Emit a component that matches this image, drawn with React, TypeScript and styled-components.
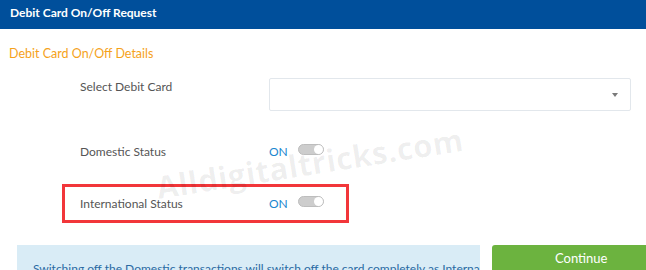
import styled, { createGlobalStyle } from 'styled-components';

const GlobalStyle = createGlobalStyle`
  html, body {
    margin: 0;
    padding: 0;
    background: #ffffff;
    overflow: hidden;
  }
  body {
    font-family: 'Segoe UI', Lato, 'Liberation Sans', sans-serif;
    font-size: 12px;
  }
`;

const Page = styled.div`
  position: relative;
  width: 646px;
  height: 270px;
  overflow: hidden;
`;

const Header = styled.div`
  height: 29px;
  background: #004f9b;
  color: #ffffff;
  font-weight: 700;
  font-size: 12px;
  display: flex;
  align-items: center;
  padding-left: 10px;
  padding-bottom: 4px;
  box-sizing: border-box;
`;

const SectionTitle = styled.div`
  color: #f5a21b;
  font-size: 12.5px;
  padding: 17px 0 0 9px;
  line-height: 16px;
`;

const Form = styled.div`
  display: flex;
  flex-direction: column;
  padding-top: 16px;
`;

const Row = styled.div<{ $highlight?: boolean; $align?: string }>`
  display: flex;
  align-items: ${(p) => p.$align || 'center'};
  box-sizing: border-box;
  margin-left: ${(p) => (p.$highlight ? '62px' : '0')};
  padding-left: ${(p) => (p.$highlight ? '15px' : '80px')};
  width: ${(p) => (p.$highlight ? '287px' : 'auto')};
  height: ${(p) => (p.$highlight ? '39px' : 'auto')};
  border: ${(p) => (p.$highlight ? '3px solid #f2363a' : 'none')};
`;

const Label = styled.div<{ $top?: number }>`
  width: 189px;
  color: #555555;
  font-size: 12px;
  line-height: 16px;
  padding-top: ${(p) => p.$top ?? 0}px;
  flex-shrink: 0;
`;

const Select = styled.div`
  width: 362px;
  height: 33px;
  box-sizing: border-box;
  border: 1.5px solid #e2e7ec;
  border-radius: 2px;
  display: flex;
  align-items: center;
  justify-content: flex-end;
  padding-right: 12px;
`;

const Caret = styled.span`
  width: 0;
  height: 0;
  border-left: 3px solid transparent;
  border-right: 3px solid transparent;
  border-top: 4px solid #7a7a7a;
  margin-top: 1px;
`;

const StatusText = styled.span`
  color: #1a87cf;
  font-size: 12px;
  line-height: 16px;
  width: 29px;
  padding-top: 1px;
`;

const Toggle = styled.span`
  position: relative;
  display: inline-block;
  width: 26px;
  height: 11px;
  box-sizing: border-box;
  border-radius: 6px;
  background: #cdcdcd;
  border: 1px solid #bdbdbd;
  margin-top: -4px;
  &::after {
    content: '';
    position: absolute;
    right: 0;
    top: 0;
    width: 9px;
    height: 9px;
    border-radius: 50%;
    background: #ffffff;
  }
`;

const Spacer = styled.div<{ $h: number }>`
  height: ${(p) => p.$h}px;
`;

const Footer = styled.div`
  display: flex;
  gap: 12px;
  padding-left: 17px;
  margin-top: 22px;
`;

const InfoBox = styled.div`
  width: 463px;
  flex-shrink: 0;
  height: 50px;
  background: #d9ecf6;
  color: #2a6aa3;
  font-size: 12px;
  line-height: 16px;
  padding: 16px 0 0 16px;
  box-sizing: border-box;
  white-space: nowrap;
  overflow: hidden;
`;

const ContinueButton = styled.button`
  flex-shrink: 0;
  width: 170px;
  height: 30px;
  border: none;
  border-radius: 3px 0 0 0;
  background: #6cb33f;
  color: #ffffff;
  font-family: inherit;
  font-size: 13px;
  margin: 0;
  text-align: left;
  padding: 0 0 5px 63px;
`;

const Watermark = styled.div`
  position: absolute;
  left: 160px;
  top: 166px;
  font-family: 'Open Sans', 'DejaVu Sans', sans-serif;
  font-weight: 700;
  font-size: 31px;
  letter-spacing: 0.5px;
  color: rgba(0, 0, 0, 0.065);
  transform: rotate(-9deg);
  transform-origin: left bottom;
  pointer-events: none;
  white-space: nowrap;
`;

export default function App() {
  return (
    <Page>
      <GlobalStyle />
      <Header>Debit Card On/Off Request</Header>
      <SectionTitle>Debit Card On/Off Details</SectionTitle>
      <Form>
        <Row $align="flex-start">
          <Label $top={1}>Select Debit Card</Label>
          <Select>
            <Caret />
          </Select>
        </Row>
        <Spacer $h={32} />
        <Row>
          <Label>Domestic Status</Label>
          <StatusText>ON</StatusText>
          <Toggle />
        </Row>
        <Spacer $h={24} />
        <Row $highlight>
          <Label>International Status</Label>
          <StatusText>ON</StatusText>
          <Toggle />
        </Row>
      </Form>
      <Footer>
        <InfoBox>
          Switching off the Domestic transactions will switch off the card completely as International transactions
        </InfoBox>
        <ContinueButton>Continue</ContinueButton>
      </Footer>
      <Watermark>Alldigitaltricks.com</Watermark>
    </Page>
  );
}
